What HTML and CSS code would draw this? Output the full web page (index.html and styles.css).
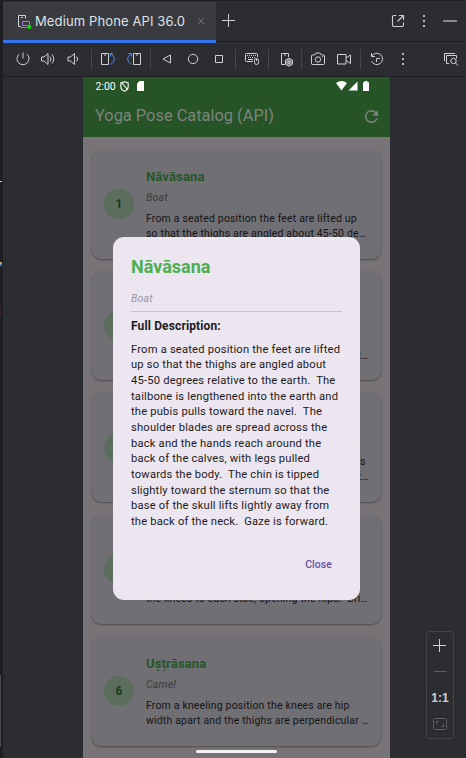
FILE: index.html
```html
<!DOCTYPE html>
<html lang="en">
<head>
<meta charset="utf-8">
<title>Medium Phone API 36.0</title>
<link rel="stylesheet" href="styles.css">
</head>
<body>
<div class="ide">
  <div class="edge"><i class="mark dash"></i><i class="mark hint"></i><i class="mark error"></i><i class="mark thumb"></i></div>
  <div class="panel">
    <header class="tabs">
      <div class="tab">
        <svg class="tab-icon" width="16" height="16" viewBox="0 0 16 16" fill="none">
          <path d="M4 12.500H1.500v-11h7v3M4 3.500h2" stroke="#ced0d6"/>
          <path d="M5.500 7.500h7v4h-7zM4 13.500h6" stroke="#a571e6"/>
          <circle cx="12.300" cy="13" r="2" fill="#00e600"/>
        </svg>
        <span class="tab-name">Medium Phone API 36.0</span>
        <svg class="close" width="8" height="8" viewBox="0 0 8 8" stroke="#6f737a"><path d="M.7.7l6.600 6.600M7.300.7L.7 7.300"/></svg>
      </div>
      <svg class="add" width="14" height="14" viewBox="0 0 14 14" stroke="#ced0d6"><path d="M6.500 0v13M0 6.500h13"/></svg>
      <div class="tab-actions">
        <svg width="14" height="14" viewBox="0 0 14 14" fill="none" stroke="#ced0d6" stroke-width="1.100"><path d="M5.500 1.500H3a1.500 1.500 0 0 0-1.500 1.500v8A1.500 1.500 0 0 0 3 12.500h8a1.500 1.500 0 0 0 1.500-1.500V8.500M8 1.500h4.500V6M12.500 1.500L6.500 7.500"/></svg>
        <svg width="14" height="14" viewBox="0 0 14 14" fill="#b4b8bf"><path d="M6 1h2v2H6zM6 6h2v2H6zM6 11h2v2H6z"/></svg>
        <svg width="14" height="14" viewBox="0 0 14 14" fill="#868a91"><path d="M0 6h14v2H0z"/></svg>
      </div>
    </header>
    <div class="toolbar">
      <svg class="tool" viewBox="0 0 20 20"><path d="M6 5.200a6 6 0 1 0 8 0M10 3.500v6"/></svg>
      <svg class="tool sound" viewBox="0 0 20 20"><path d="M3.500 8h2.500l4-3.500v11L6 12H3.500zM12 7.500q2 2.500 0 5M14 5.500q3.500 4.500 0 9"/></svg>
      <svg class="tool sound" viewBox="0 0 20 20"><path d="M5 8h2.500l4-3.500v11l-4-3.500H5zM13.500 7.500q2.500 2.500 0 5"/></svg>
      <i class="sep first"></i>
      <svg class="tool" viewBox="0 0 20 20"><path d="M3.500 4.500h7v11h-7zM6 6h2"/><path class="blue" d="M12 4.500h3M12.500 4.500v3M12.500 4.500c5 3 5 8 0 11"/></svg>
      <svg class="tool" viewBox="0 0 20 20"><path d="M9.500 4.500h7v11h-7zM12 6h2"/><path class="blue" d="M8 4.500H4.500M7.500 4.500v3M7.500 4.500c-5 3-5 8 0 11"/></svg>
      <i class="sep"></i>
      <svg class="tool" viewBox="0 0 20 20"><path d="M13.500 6v8L6 10z"/></svg>
      <svg class="tool" viewBox="0 0 20 20"><circle cx="10" cy="10" r="4.700"/></svg>
      <svg class="tool" viewBox="0 0 20 20"><path d="M6.500 6.500h7v7h-7z"/></svg>
      <i class="sep"></i>
      <svg class="tool" viewBox="0 0 20 20"><path d="M11 12.500H4.500a1 1 0 0 1-1-1v-6a1 1 0 0 1 1-1h10a1 1 0 0 1 1 1V8M6 10.500h5"/><path stroke-dasharray="1 1" d="M5 6.500h9M6 8.500h7"/><rect x="12.500" y="9.500" width="4" height="6" rx="2"/><path d="M14.500 10v2"/></svg>
      <i class="sep"></i>
      <svg class="tool settings" viewBox="0 0 20 20"><path d="M8 15.500H4.500v-11h7V8M7 6h2"/><path fill="#777a80" d="M12 9.200l3.500 2v4l-3.500 2-3.500-2v-4z"/><circle cx="12" cy="13.200" r="1.300"/></svg>
      <i class="sep after-settings"></i>
      <svg class="tool" viewBox="0 0 20 20"><path d="M3.500 7a1 1 0 0 1 1-1h2l1.500-2h4l1.500 2h2a1 1 0 0 1 1 1v7.500a1 1 0 0 1-1 1h-11a1 1 0 0 1-1-1z"/><circle cx="10" cy="10.500" r="2.700"/><path d="M14 7.500h1"/></svg>
      <svg class="tool" viewBox="0 0 20 20"><path d="M3.500 5.500h8.500v9.500H3.500zM12 9l4.500-3v8.500L12 11.500"/></svg>
      <i class="sep"></i>
      <svg class="tool" viewBox="0 0 20 20"><path d="M4.500 4v3.500H8M4.800 7.200a5.700 5.700 0 1 1-.2 5M13 9.500h-3.500V13"/></svg>
      <svg class="tool dots" viewBox="0 0 20 20"><path d="M9 4h2v2H9zM9 9h2v2H9zM9 14h2v2H9z"/></svg>
      <svg class="tool search" viewBox="0 0 20 20"><path d="M3.500 12V4.500H14M8 14.500H5.500v-8h10v3"/><circle cx="12.500" cy="12" r="2.700"/><path d="M14.500 14l2.500 2.500"/></svg>
    </div>
    <main class="stage">
      <section class="phone">
        <div class="appbar">
          <div class="status">
            <span>2:00</span>
            <svg class="shield" width="9" height="11" viewBox="0 0 9 11" fill="none" stroke="#fff" stroke-width="1.100"><path d="M4.500.8L8.200 2v3.500c0 2.300-1.600 3.900-3.700 4.700C2.400 9.400.8 7.800.8 5.500V2zM2 2l5 6"/></svg>
            <svg class="sd" width="7" height="10" viewBox="0 0 7 10" fill="#fff"><path d="M2.500 0H7v10H0V2.500z"/></svg>
            <svg class="signals" width="34" height="10" viewBox="0 0 34 10" fill="#fff"><path d="M0 2q5.500-4 11 0L5.500 9.500zM12.500 9.500h9V.5zM27 1.200h1.500V0h3v1.200H33V10h-6z"/></svg>
          </div>
          <div class="title-row">
            <h1>Yoga Pose Catalog (API)</h1>
            <svg width="13" height="13" viewBox="4 4 16 16" fill="#7d837d"><path d="M17.650 6.350A7.960 7.960 0 0 0 12 4a8 8 0 1 0 7.730 10h-2.080A6 6 0 1 1 12 6c1.660 0 3.140.690 4.220 1.780L13 11h7V4z"/></svg>
          </div>
        </div>
        <div class="list">
          <article class="card">
            <b class="num">1</b>
            <div class="info"><h2>Nāvāsana</h2><em>Boat</em><p>From a seated position the feet are lifted up<br>so that the thighs are angled about 45-50 de…</p></div>
          </article>
          <article class="card">
            <b class="num"></b>
            <div class="info"><h2></h2><em></em><p class="tail"><br>t…</p></div>
          </article>
          <article class="card">
            <b class="num"></b>
            <div class="info"><h2></h2><em></em><p class="tail"><span class="upper">s</span><br>t…</p></div>
          </article>
          <article class="card">
            <b class="num"></b>
            <div class="info"><h2></h2><em></em><p><br>the knees to each side, opening the hips.&nbsp; Bri…</p></div>
          </article>
          <article class="card">
            <b class="num">6</b>
            <div class="info"><h2>Uṣṭrāsana</h2><em>Camel</em><p>From a kneeling position the knees are hip<br>width apart and the thighs are perpendicular …</p></div>
          </article>
        </div>
        <div class="dialog" role="dialog">
          <h2>Nāvāsana</h2>
          <em>Boat</em>
          <h3>Full Description:</h3>
          <p>From a seated position the feet are lifted<br>up so that the thighs are angled about<br>45-50 degrees relative to the earth.&nbsp; The<br>tailbone is lengthened into the earth and<br>the pubis pulls toward the navel.&nbsp; The<br>shoulder blades are spread across the<br>back and the hands reach around the<br>back of the calves, with legs pulled<br>towards the body.&nbsp; The chin is tipped<br>slightly toward the sternum so that the<br>base of the skull lifts lightly away from<br>the back of the neck.&nbsp; Gaze is forward.</p>
          <button>Close</button>
        </div>
        <i class="home"></i>
      </section>
      <aside class="zoom">
        <svg width="14" height="14" viewBox="0 0 14 14" stroke="#ced0d6"><path d="M6.500 0v13M0 6.500h13"/></svg>
        <i class="minus"></i>
        <span>1:1</span>
        <svg width="14" height="12" viewBox="0 0 14 12" fill="none" stroke="#5a5d63"><rect x=".5" y=".5" width="13" height="11" rx="1"/><path d="M3.500 6V3.500H6M10.500 5.500v3H8"/></svg>
      </aside>
    </main>
  </div>
</div>
</body>
</html>
```
FILE: styles.css
```css
* { box-sizing: border-box; margin: 0; padding: 0; }
body { width: 466px; height: 758px; overflow: hidden; background: #2b2d30; font-family: Roboto, sans-serif; }
svg { display: block; flex: none; }
.ide { display: flex; height: 758px; }
.edge { position: relative; width: 3px; background: #1e1f22; }
.mark { position: absolute; left: 0; width: 2px; }
.dash { top: 181px; height: 1px; background: #ced0d6; }
.hint { top: 262px; height: 4px; background: linear-gradient(#c9a35a 50%, #3c83c4 50%); }
.error { top: 306px; width: 1px; height: 8px; border: solid #45252a; border-width: 2px 0; }
.thumb { top: 675px; height: 72px; width: 1px; background: #4b4d50; }
.panel { width: 463px; display: flex; flex-direction: column; }

.tabs { height: 42px; display: flex; border-top: 1px solid #1e1f22; border-bottom: 1px solid #1e1f22; }
.tab { width: 213px; height: 41px; margin-top: 1px; margin-bottom: -1px; padding: 0 11px 1px 14px; display: flex; align-items: center; background: #393b40; border-bottom: 3px solid #3574f0; position: relative; }
.tab-icon { margin-top: 2px; }
.tab-name { margin-left: 2px; font: 13px/20px Inter, sans-serif; letter-spacing: .12px; color: #dfe1e5; white-space: nowrap; width: 150px; }
.close { margin-left: auto; margin-top: 1px; }
.add { margin: 13px 0 0 6px; }
.tab-actions { margin-left: auto; margin-top: 13px; padding-right: 9px; display: flex; gap: 12px; }

.toolbar { height: 35px; padding: 0 5px 0 10px; display: flex; align-items: center; gap: 6px; border-bottom: 1px solid #1e1f22; }
.tool { width: 20px; height: 20px; fill: none; stroke: #ced0d6; stroke-width: 1; }
.sound { margin-left: -1px; }
.blue { stroke: #548af7; }
.dots { fill: #b4b8bf; stroke: none; }
.settings { margin-left: 2px; }
.after-settings { margin-left: -2px; }
.search { margin-left: auto; }
.sep { flex: none; width: 1px; height: 20px; background: #43454a; }
.first { margin-left: 2px; }

.stage { flex: 1; display: flex; padding-left: 80px; min-height: 0; }
.phone { position: relative; width: 307px; height: 681px; background: #787376; overflow: hidden; }
.appbar { height: 60px; background: #265427; }
.status { height: 18px; padding: 0 20px 0 12.500px; display: flex; align-items: center; color: #fff; font-size: 10.500px; }
.shield { margin-left: 4px; }
.sd { margin-left: 8px; }
.signals { margin-left: auto; }
.title-row { height: 42px; padding: 0 12px; display: flex; align-items: center; justify-content: space-between; }
.title-row h1 { font-size: 16.400px; font-weight: 400; line-height: 22px; color: #7d837d; }
.list { padding: 12.500px 8.600px 0 9px; display: flex; flex-direction: column; gap: 12.600px; }
.card { height: 109.200px; flex: none; padding-left: 12px; display: flex; align-items: center; gap: 12px; border-radius: 9px; background: #706f74; box-shadow: 0 1px 2px rgba(0,0,0,.26), 0 1px 2px rgba(0,0,0,.1); }
.num { width: 30px; height: 30px; border-radius: 50%; display: flex; align-items: center; justify-content: center; background: #5b6e5d; color: #173b19; font-size: 12px; }
.info { width: 224px; padding-top: .3px; white-space: nowrap; }
.info h2 { height: 18px; font-size: 13px; line-height: 18px; letter-spacing: .15px; color: #24562a; }
.info em { display: block; height: 15px; margin-top: 4px; font-size: 10.500px; line-height: 15px; letter-spacing: .19px; color: #3b3a3d; }
.info p { margin-top: 6px; font-size: 10.460px; line-height: 15px; letter-spacing: .19px; color: #151417; }
.info .tail { text-align: right; margin-right: 1.500px; }
.upper { margin-right: 3px; }

.dialog { position: absolute; left: 30px; top: 160px; width: 247px; height: 363px; padding: 18px; border-radius: 11px; background: #ece6f0; color: #1d1b20; white-space: nowrap; }
.dialog h2 { font-size: 18px; line-height: 24px; color: #4caf50; }
.dialog em { display: block; height: 33px; padding-top: 13px; font-size: 10.500px; line-height: 14px; letter-spacing: .19px; color: #9b969e; border-bottom: 1px solid #cac4d0; }
.dialog h3 { margin-top: 6px; font-size: 12px; line-height: 17px; letter-spacing: .13px; }
.dialog p { margin-top: 6.500px; font-size: 11.200px; line-height: 15.670px; letter-spacing: .19px; }
.dialog button { display: block; margin: 27.500px 10px 0 auto; border: 0; background: none; color: #6750a4; font: 500 10.460px/15px Roboto, sans-serif; letter-spacing: .08px; }
.home { position: absolute; left: 113px; bottom: 5px; width: 81px; height: 3px; border-radius: 2px; background: #f4f3f4; }

.zoom { width: 28px; height: 108px; margin: 554px 12px 0 auto; padding: 7px 0 8px; border: 1px solid #43454a; border-radius: 4px; display: flex; flex-direction: column; align-items: center; justify-content: space-between; }
.minus { width: 13px; height: 1px; margin-top: 5px; background: #5a5d63; }
.zoom span { margin-top: 6px; font: bold 12px/14px "Liberation Sans", sans-serif; color: #ced0d6; }
```
